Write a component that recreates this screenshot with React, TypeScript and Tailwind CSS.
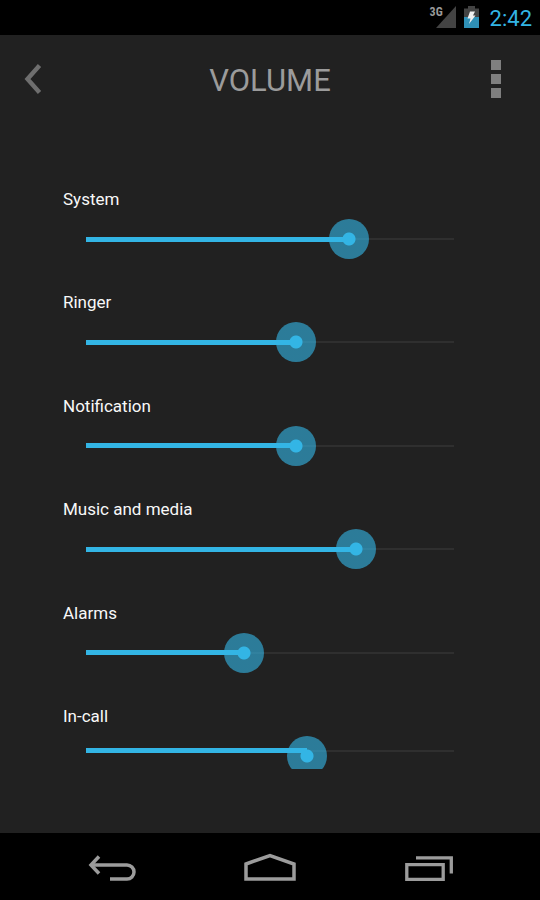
import React, { useState } from 'react';

interface Stream {
  id: string;
  label: string;
  max: number;
  level: number;
}

const STREAMS: Stream[] = [
  { id: 'system', label: 'System', max: 7, level: 5 },
  { id: 'ringer', label: 'Ringer', max: 7, level: 4 },
  { id: 'notification', label: 'Notification', max: 7, level: 4 },
  { id: 'music', label: 'Music and media', max: 15, level: 11 },
  { id: 'alarms', label: 'Alarms', max: 7, level: 3 },
  { id: 'in-call', label: 'In-call', max: 5, level: 3 },
];

const StatusBar: React.FC = () => (
  <div className="h-[35px] bg-black flex items-center justify-end gap-2 pr-2 pb-px">
    <div className="relative">
      <svg className="block" width="20" height="22" viewBox="0 0 20 22" aria-hidden="true">
        <path d="M20 0V22H0Z" fill="#434343" />
      </svg>
      <span className="absolute -left-1.5 top-0 text-[12px] leading-3 font-bold text-[#9a9a9a] font-['Roboto_Condensed','Roboto',sans-serif]">3G</span>
    </div>
    <svg className="block" width="15" height="22" viewBox="0 0 15 22" aria-hidden="true">
      <path d="M4 0H11V2.5H15V11H0V2.5H4Z" fill="#434343" />
      <path d="M0 11H15V22H0Z" fill="#2f90b6" />
      <path d="M6 5.5H11L9 9.5H11.5L5 18L6.5 12.5H3.5Z" fill="#f0f0f0" />
    </svg>
    <span className="pl-[3px] pt-[3px] text-[22px] leading-8 text-[#33b5e5]">2:42</span>
  </div>
);

const Header: React.FC = () => (
  <header className="h-[88px] px-4 flex items-center justify-between">
    <button type="button" aria-label="Back" className="w-[41px] h-12 flex items-center justify-start pl-2">
      <svg width="18" height="32" viewBox="0 0 18 32" fill="none" aria-hidden="true">
        <path d="M15.5 2.5L3.5 16L15.5 29.5" stroke="#6e6e6e" strokeWidth="4.4" />
      </svg>
    </button>
    <h1 className="pt-1 text-[31px] leading-10 text-[#9b9b9b]">VOLUME</h1>
    <button type="button" aria-label="More options" className="w-[41px] h-12 flex items-center justify-start pl-2">
      <svg width="10" height="38" viewBox="0 0 10 38" fill="#7f7f7f" aria-hidden="true">
        <path d="M0 0H10V10H0ZM0 14H10V24H0ZM0 28H10V38H0Z" />
      </svg>
    </button>
  </header>
);

interface VolumeRowProps {
  stream: Stream;
  clipped: boolean;
  onChange: (level: number) => void;
}

const VolumeRow: React.FC<VolumeRowProps> = ({ stream, clipped, onChange }) => (
  <div>
    <label htmlFor={stream.id} className="block pb-[10px] text-[17px] leading-5 text-[#f8f8f8]">
      {stream.label}
    </label>
    <div className={`relative mx-[3px] ${clipped ? 'h-[33px] overflow-hidden' : 'h-10'}`}>
      {/* track and fill, inset by half a thumb on each side */}
      <div className={`absolute inset-x-5 top-0 flex items-center ${clipped ? 'h-[30px]' : 'h-10'}`}>
        <div className="w-full h-0.5 bg-[#2f2f2f] flex items-center">
          <div
            className="h-[5px] shrink-0 bg-[#33b5e5]"
            style={{ width: `${(stream.level / stream.max) * 100}%` }}
          />
        </div>
      </div>
      <input
        id={stream.id}
        type="range"
        min={0}
        max={stream.max}
        value={stream.level}
        onChange={(e) => onChange(Number(e.target.value))}
        className="relative block w-full h-10 appearance-none bg-transparent cursor-pointer [&::-webkit-slider-thumb]:appearance-none [&::-webkit-slider-thumb]:size-10 [&::-webkit-slider-thumb]:rounded-full [&::-webkit-slider-thumb]:bg-[radial-gradient(circle,#33b5e5_6px,#33b5e59c_7px)]"
      />
    </div>
  </div>
);

const NavBar: React.FC = () => (
  <nav className="h-[67px] px-[33px] bg-black grid grid-cols-3">
    <button type="button" aria-label="Back" className="flex items-center justify-center">
      <svg width="56" height="35" viewBox="0 0 56 35" fill="none" stroke="#9c9c9c" strokeWidth="3.5" aria-hidden="true">
        <path d="M8 16H43A7 7 0 0 1 43 30H26" />
        <path d="M15 7.5L7 16L15 24.5" />
      </svg>
    </button>
    <button type="button" aria-label="Home" className="flex items-center justify-center">
      <svg width="56" height="35" viewBox="0 0 56 35" fill="none" stroke="#9c9c9c" strokeWidth="3.5" aria-hidden="true">
        <path d="M4 15L28 6.5L52 15V30H4Z" />
      </svg>
    </button>
    <button type="button" aria-label="Recent apps" className="flex items-center justify-center">
      <svg width="56" height="35" viewBox="0 0 56 35" fill="none" stroke="#9c9c9c" strokeWidth="3.3" aria-hidden="true">
        <path d="M6.8 15.7H43.2V30.3H6.8Z" />
        <path d="M16 8.8H51.3V24.5" />
      </svg>
    </button>
  </nav>
);

const App: React.FC = () => {
  const [streams, setStreams] = useState<Stream[]>(STREAMS);

  const setLevel = (id: string, level: number) => {
    setStreams((prev) => prev.map((s) => (s.id === id ? { ...s, level } : s)));
  };

  return (
    <div className="min-h-screen flex flex-col bg-[#212121] font-['Roboto',sans-serif]">
      <StatusBar />
      <Header />
      <main className="flex-1 px-[63px] pt-[66px] pb-16 flex flex-col justify-between">
        {streams.map((s, i) => (
          <VolumeRow
            key={s.id}
            stream={s}
            clipped={i === streams.length - 1}
            onChange={(level) => setLevel(s.id, level)}
          />
        ))}
      </main>
      <NavBar />
    </div>
  );
};

export default App;
